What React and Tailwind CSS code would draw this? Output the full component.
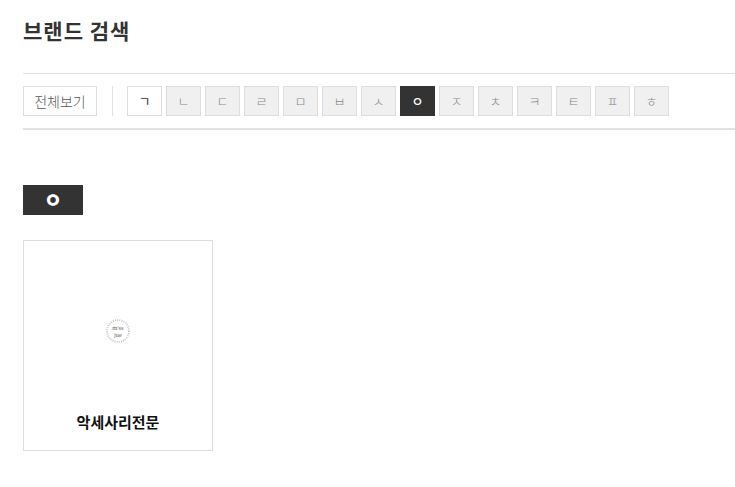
const font = { fontFamily: '"Noto Sans CJK KR", "Liberation Sans", sans-serif' };
const letters = ["ㄱ","ㄴ","ㄷ","ㄹ","ㅁ","ㅂ","ㅅ","ㅇ","ㅈ","ㅊ","ㅋ","ㅌ","ㅍ","ㅎ"];

function Logo() {
  return (
    <svg width="26" height="26" viewBox="0 0 26 26" className="block">
      <circle cx="13" cy="13" r="11" fill="none" stroke="#c4c4c4" strokeWidth="1.8" strokeDasharray="1 1.2" />
      <text x="13" y="11.5" textAnchor="middle" fontSize="6.5" fill="#666" fontFamily="Liberation Serif, serif">m'ss</text>
      <text x="13" y="19" textAnchor="middle" fontSize="6.5" fill="#666" fontFamily="Liberation Serif, serif">jue</text>
    </svg>
  );
}

export default function App() {
  return (
    <div className="w-[735px] h-[487px] bg-white pl-[23px] overflow-hidden" style={font}>
      <h1 className="pt-4 h-[73px] text-[21px] leading-[28px] font-bold text-[#333333] tracking-[1px]">브랜드 검색</h1>
      <div className="h-[57px] border-t border-b-2 border-[#e1e1e1] flex items-start pt-3 box-border">
        <button className="w-[74px] h-[30px] border border-[#dddddd] bg-white text-[14px] font-light leading-[28px] text-[#555555] text-center">전체보기</button>
        <div className="w-px h-[30px] bg-[#e1e1e1] ml-[15px] mr-[14px]" />
        <div className="flex gap-1">
          {letters.map((l, i) => (
            <button
              key={l}
              className={
                i === 0
                  ? "w-[35px] h-[30px] border border-[#dddddd] bg-white text-[13px] leading-[28px] text-[#333333] text-center"
                  : i === 7
                  ? "w-[35px] h-[30px] border border-[#333333] bg-[#333333] text-[13px] leading-[28px] font-medium text-white text-center"
                  : "w-[35px] h-[30px] border border-[#dddddd] bg-[#f0f0f0] text-[13px] font-light leading-[28px] text-[#888888] text-center"
              }
            >
              {l}
            </button>
          ))}
        </div>
      </div>
      <div className="mt-[55px] w-[60px] h-[30px] bg-[#333333] text-white text-[20px] leading-[30px] font-black text-center">ㅇ</div>
      <div className="mt-[25px] w-[190px] h-[211px] border border-[#dddddd] flex flex-col items-center">
        <div className="h-[167px] flex items-center justify-center pt-3">
          <Logo />
        </div>
        <div className="text-[15px] leading-[20px] font-bold text-[#111111] mt-1">악세사리전문</div>
      </div>
    </div>
  );
}
